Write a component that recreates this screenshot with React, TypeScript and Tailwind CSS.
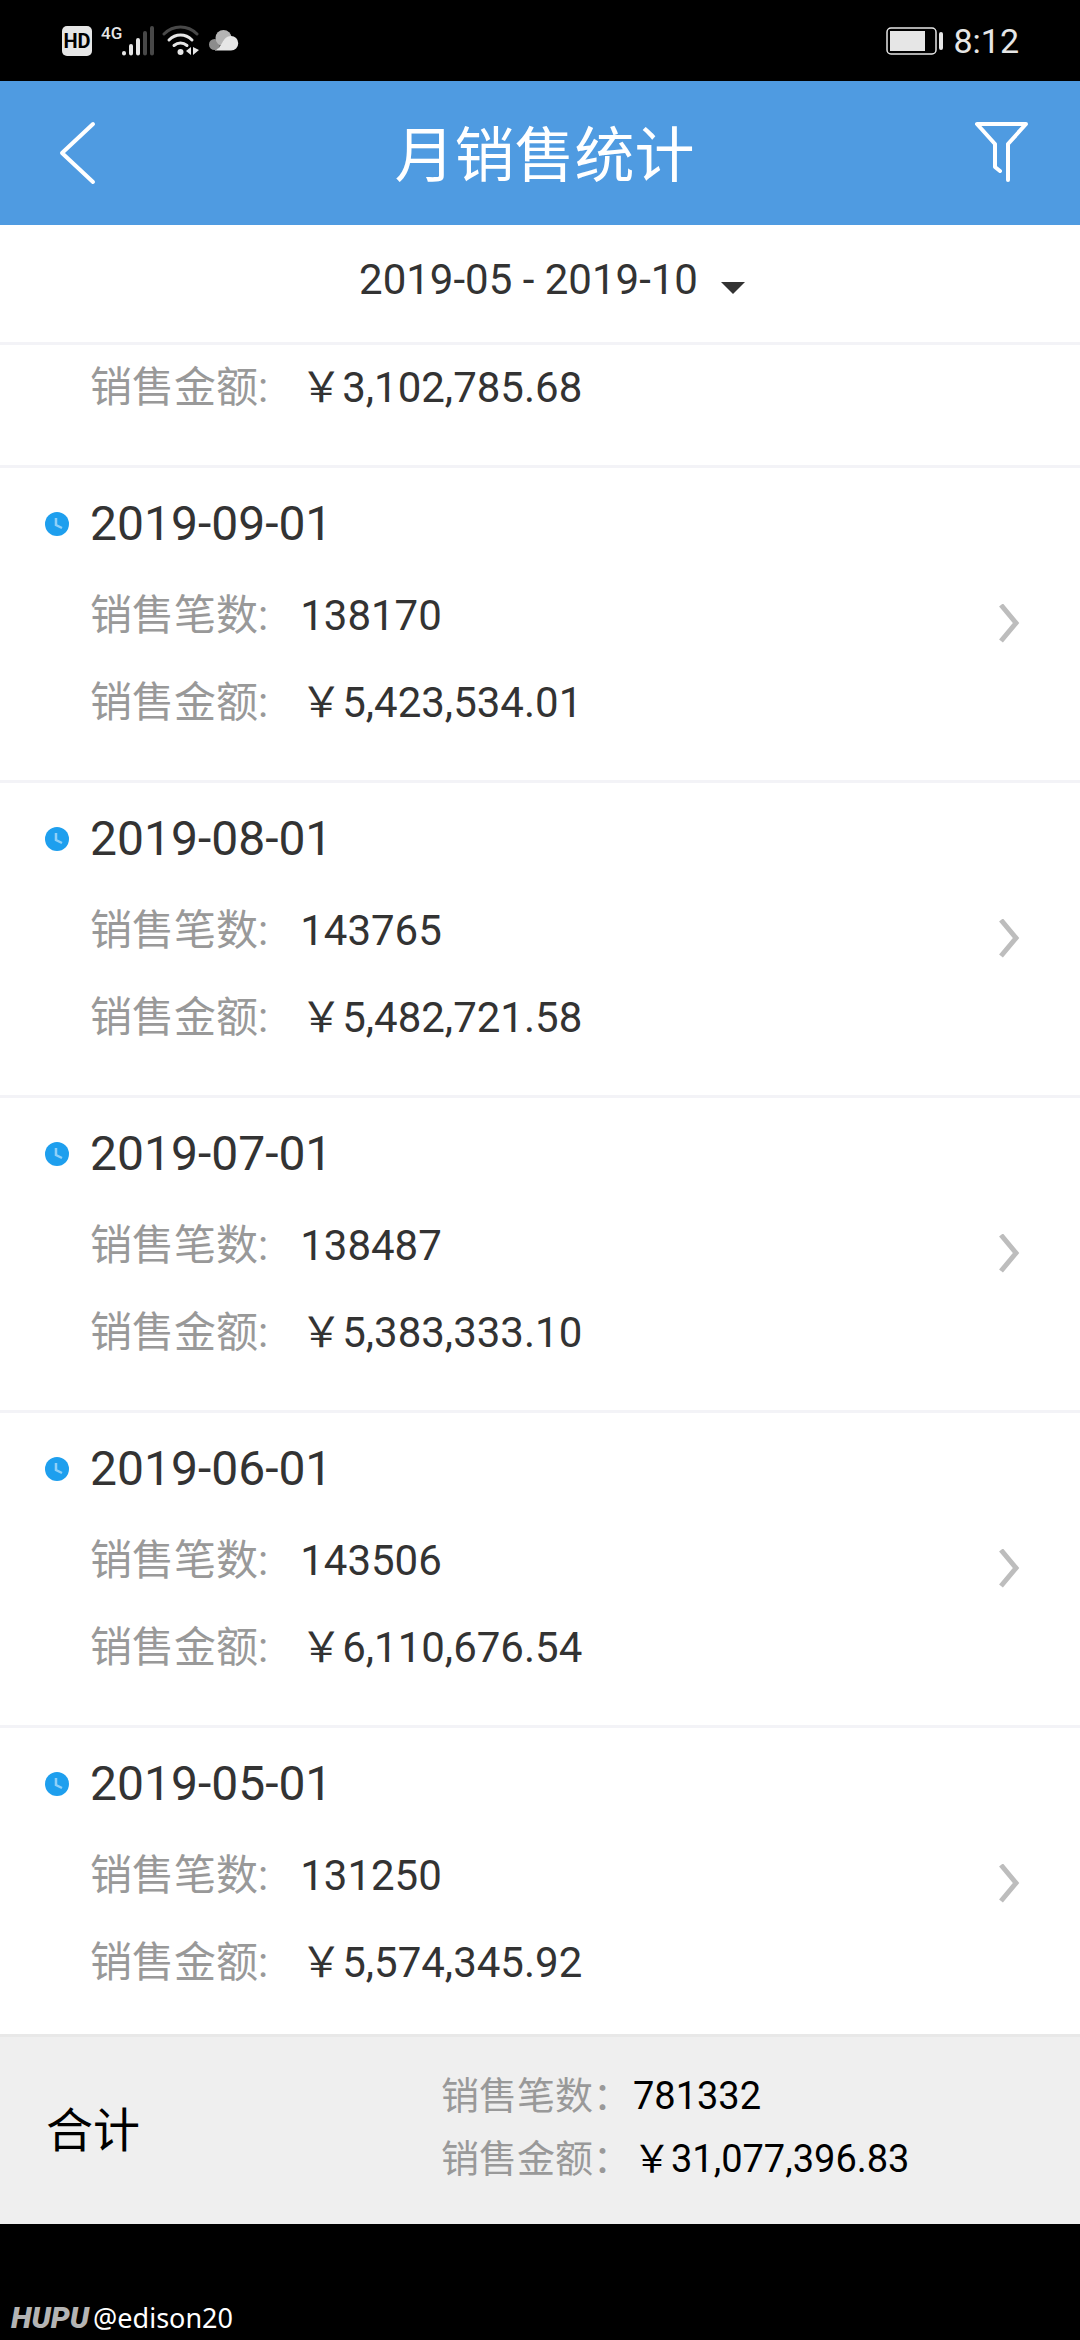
type Entry = { date?: string; count?: string; amount: string };

const entries: Entry[] = [
  { amount: "3,102,785.68" },
  { date: "2019-09-01", count: "138170", amount: "5,423,534.01" },
  { date: "2019-08-01", count: "143765", amount: "5,482,721.58" },
  { date: "2019-07-01", count: "138487", amount: "5,383,333.10" },
  { date: "2019-06-01", count: "143506", amount: "6,110,676.54" },
  { date: "2019-05-01", count: "131250", amount: "5,574,345.92" },
];

function StatusBar() {
  return (
    <div className="flex h-[81px] shrink-0 items-center justify-between bg-black pl-[62px] pr-[61px] text-[#e6e6e6]">
      <div className="flex items-center">
        <span className="flex h-[30px] w-[30px] items-center justify-center rounded-[5px] bg-[#e6e6e6] text-[20px] leading-none font-bold text-black">
          HD
        </span>
        <span className="ml-[9px] self-start text-[17px] leading-[16px] font-medium">4G</span>
        <svg className="h-[30px] w-[32px]" viewBox="0 0 32 30" strokeWidth="4" strokeLinecap="round" aria-hidden="true">
          <path d="M2 27v0.5M9 20v7.5M16 14v13.5" stroke="#e6e6e6" />
          <path d="M23 7v20.5M30 2v25.5" stroke="#484848" />
        </svg>
        <svg className="ml-2 h-[31px] w-[38px]" viewBox="0 0 38 31" fill="none" strokeWidth="3" strokeLinecap="round" aria-hidden="true">
          <path d="M2 9Q9 2 18.500 2T35 9" stroke="#484848" />
          <path d="M7 15Q12 10 18.500 10T30 15" stroke="#e6e6e6" />
          <path d="M12 20.500Q15 18 18.500 18T25 20.500" stroke="#e6e6e6" />
          <circle cx="18.500" cy="27" r="3" fill="#e6e6e6" />
          <path d="M29 22v8l-5-4zM31 22v8l6-5z" fill="#e6e6e6" />
        </svg>
        <svg className="ml-[9px] h-[21px] w-[30px]" viewBox="0 0 30 21" aria-hidden="true">
          <circle cx="5.500" cy="14.500" r="5.500" fill="#8c8c8c" />
          <circle cx="14.500" cy="8" r="8" fill="#b4b4b4" />
          <path d="M6 20C13 19 13 6 22 6a7.250 7.250 0 0 1 0 14.500H6z" fill="#e6e6e6" />
        </svg>
      </div>
      <div className="flex items-center gap-[9px]">
        <svg className="h-[28px] w-[58px]" viewBox="0 0 58 28" aria-hidden="true">
          <rect x="1" y="1" width="49" height="26" rx="4" fill="none" stroke="#e6e6e6" strokeWidth="1.500" />
          <rect x="4" y="4" width="35" height="20" fill="#e6e6e6" />
          <rect x="53" y="5" width="4" height="18" rx="2" fill="#e6e6e6" />
        </svg>
        <span className="text-[34px] leading-10">8:12</span>
      </div>
    </div>
  );
}

function Header() {
  return (
    <header className="flex h-36 shrink-0 items-center justify-between bg-[#4f9be1] pr-[49px] pl-[58px] text-white">
      <button type="button" aria-label="返回" className="w-14">
        <svg className="h-[64px] w-[38px]" viewBox="0 0 38 64" fill="none" stroke="currentColor" strokeWidth="4" strokeLinecap="round" strokeLinejoin="round">
          <path d="M35 3L4 32L35 61" />
        </svg>
      </button>
      <h1 className="pt-2 text-[60px] leading-[80px]">月销售统计</h1>
      <button type="button" aria-label="筛选" className="flex w-14 justify-end">
        <svg className="h-[64px] w-[56px]" viewBox="0 0 56 64" fill="none" stroke="currentColor" strokeWidth="4" strokeLinecap="round" strokeLinejoin="round">
          <path d="M25 50L20 46V23L2 3H51L33 23V59" />
        </svg>
      </button>
    </header>
  );
}

function Field({ label, value }: { label: string; value: string }) {
  return (
    <div className="flex gap-8 text-[42px] leading-[60px]">
      <dt className="text-[#999999]">{label}:</dt>
      <dd>{value}</dd>
    </div>
  );
}

function EntryRow({ entry }: { entry: Entry }) {
  if (!entry.date) {
    return (
      <li className="border-b-[3px] border-[#f3f3f7] pt-[13px] pb-[47px] pl-[90px]">
        <dl>
          <Field label="销售金额" value={"￥" + entry.amount} />
        </dl>
      </li>
    );
  }
  return (
    <li className="border-b-[3px] border-[#f3f3f7] last:-mb-1.5 last:border-b-0">
      <a href="#" className="flex items-center justify-between pr-[60px] pl-[45px]">
        <div className="pt-6 pb-[47px]">
          <h2 className="flex items-center gap-[21px] text-[48px] leading-[64px]">
            <svg className="h-6 w-6" viewBox="0 0 24 24" aria-hidden="true">
              <circle cx="12" cy="12" r="12" fill="#1e9fee" />
              <path d="M11 6v7l6 3" fill="none" stroke="#8fd0f8" strokeWidth="2.500" />
            </svg>
            {entry.date}
          </h2>
          <dl className="mt-[30px] flex flex-col gap-[27px] pl-[45px]">
            <Field label="销售笔数" value={entry.count ?? ""} />
            <Field label="销售金额" value={"￥" + entry.amount} />
          </dl>
        </div>
        <svg className="h-[40px] w-[21px]" viewBox="0 0 21 40" fill="none" stroke="#bdbdbd" strokeWidth="5" aria-hidden="true">
          <path d="M2 1L17 19L2 37" />
        </svg>
      </a>
    </li>
  );
}

function Total({ label, value }: { label: string; value: string }) {
  return (
    <div className="flex gap-0.5">
      <dt className="text-[#999999]">{label}：</dt>
      <dd>{value}</dd>
    </div>
  );
}

export default function App() {
  return (
    <div className="flex min-h-screen flex-col bg-white font-[Roboto,'Noto_Sans_CJK_SC',sans-serif] text-[#333333]">
      <StatusBar />
      <Header />
      <button type="button" className="flex h-[120px] shrink-0 items-center justify-center gap-[23px] border-b-[3px] border-[#f3f3f7] pb-2 pl-6 text-[42px] leading-[60px]">
        2019-05 - 2019-10
        <svg className="mt-4 h-3 w-6" viewBox="0 0 24 12" aria-hidden="true">
          <path d="M0 0H24L12 12z" fill="#333333" />
        </svg>
      </button>
      <main className="flex-1 overflow-hidden">
        <ul>
          {entries.map((entry) => (
            <EntryRow key={entry.amount} entry={entry} />
          ))}
        </ul>
      </main>
      <section className="flex h-[190px] shrink-0 items-center border-t-[3px] border-[#e8e8e8] bg-[#efefef] pl-[46px] text-black">
        <h2 className="w-[38%] text-[47px] leading-[64px]">合计</h2>
        <dl className="pb-1.5 pl-0.5 text-[38px] leading-[63px]">
          <Total label="销售笔数" value="781332" />
          <Total label="销售金额" value="￥31,077,396.83" />
        </dl>
      </section>
      <footer className="flex h-[116px] shrink-0 items-end gap-1 bg-black pb-1 pl-[11px] leading-9">
        <span className="font-[Roboto] text-[30px] font-black text-[#b4b4b4] italic">HUPU</span>
        <span className="font-['Noto_Sans'] text-[27px] text-white">@edison20</span>
      </footer>
    </div>
  );
}
